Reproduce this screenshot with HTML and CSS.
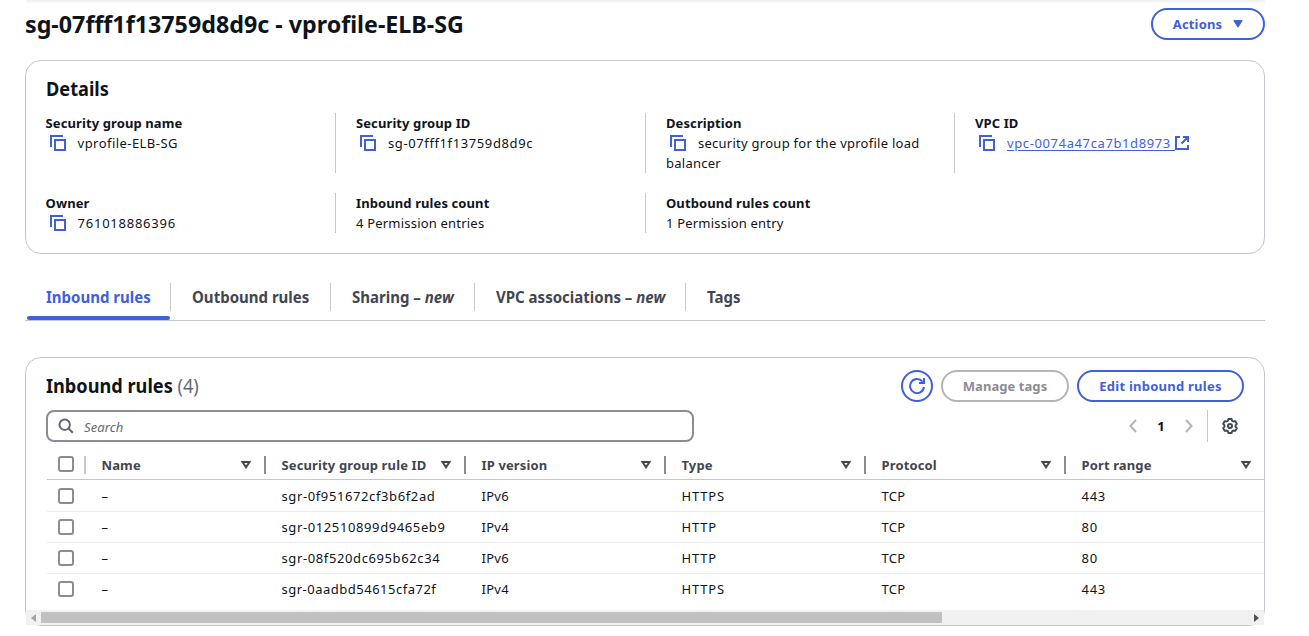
FILE: index.html
```html
<!DOCTYPE html>
<html lang="en">
<head>
<meta charset="utf-8">
<title>sg-07fff1f13759d8d9c - vprofile-ELB-SG</title>
<link rel="stylesheet" href="styles.css">
</head>
<body>
<svg class="defs" width="0" height="0">
  <symbol id="copy" viewBox="0 0 16 16"><path d="M1 12V1h12M5 5h10v10H5z" fill="none" stroke="currentColor" stroke-width="2"/></symbol>
  <symbol id="sort" viewBox="0 0 10 8"><path d="M1.500 1h7L5 6.200z" fill="none" stroke="currentColor" stroke-width="2"/></symbol>
</svg>
<div class="top-shadow"></div>
<main class="page">
  <header class="page-header">
    <h1>sg-07fff1f13759d8d9c - vprofile-ELB-SG</h1>
    <button class="btn actions">Actions<svg width="10" height="8" viewBox="0 0 10 8"><path d="M.8.6h8.400L5 7.200z" fill="currentColor" stroke="currentColor" stroke-linejoin="round"/></svg></button>
  </header>

  <section class="card details">
    <h2>Details</h2>
    <dl class="grid">
      <div class="cell"><dt>Security group name</dt><dd><svg class="copy"><use href="#copy"/></svg><span class="mixed">vprofile-ELB-SG</span></dd></div>
      <div class="cell"><dt>Security group ID</dt><dd><svg class="copy"><use href="#copy"/></svg><span class="id">sg-07fff1f13759d8d9c</span></dd></div>
      <div class="cell"><dt>Description</dt><dd><svg class="copy"><use href="#copy"/></svg>security group for the vprofile load balancer</dd></div>
      <div class="cell"><dt>VPC ID</dt><dd><svg class="copy"><use href="#copy"/></svg><a class="id" href="#">vpc-0074a47ca7b1d8973&nbsp;</a><svg class="external" width="14" height="14" viewBox="0 0 14 14"><path d="M5 1H1v12h12V9M8 1h5v5M13 1 6.500 7.500" fill="none" stroke="currentColor" stroke-width="2"/></svg></dd></div>
      <div class="cell"><dt>Owner</dt><dd><svg class="copy"><use href="#copy"/></svg><span class="num">761018886396</span></dd></div>
      <div class="cell"><dt>Inbound rules count</dt><dd class="plain">4 Permission entries</dd></div>
      <div class="cell"><dt>Outbound rules count</dt><dd class="plain">1 Permission entry</dd></div>
    </dl>
  </section>

  <nav class="tabs">
    <a class="tab active" href="#"><span>Inbound rules</span></a>
    <a class="tab outbound" href="#"><span>Outbound rules</span></a>
    <a class="tab sharing" href="#"><span>Sharing – <em>new</em></span></a>
    <a class="tab vpc" href="#"><span>VPC associations – <em>new</em></span></a>
    <a class="tab" href="#"><span>Tags</span></a>
  </nav>

  <section class="card rules">
    <header class="rules-header">
      <h2>Inbound rules <span class="count">(4)</span></h2>
      <div class="buttons">
        <button class="btn refresh" aria-label="Refresh"><svg width="16" height="16" viewBox="0 0 16 16"><path d="M15 9A7 7 0 1 1 13.500 3.700M15 0v5h-5" fill="none" stroke="currentColor" stroke-width="2"/></svg></button>
        <button class="btn manage" disabled>Manage tags</button>
        <button class="btn edit">Edit inbound rules</button>
      </div>
    </header>
    <div class="tools">
      <div class="search"><svg width="16" height="16" viewBox="0 0 16 16"><path d="M10.500 10.500l4.300 4.300" stroke="currentColor" stroke-width="2"/><circle cx="6.700" cy="6.700" r="5.200" fill="none" stroke="currentColor" stroke-width="2"/></svg><span>Search</span></div>
      <div class="pager">
        <svg class="chev" width="8" height="14" viewBox="0 0 8 14"><path d="M7 1 1.500 7 7 13" fill="none" stroke="currentColor" stroke-width="2"/></svg>
        <b>1</b>
        <svg class="chev" width="8" height="14" viewBox="0 0 8 14"><path d="M1 1l5.500 6L1 13" fill="none" stroke="currentColor" stroke-width="2"/></svg>
        <span class="rule"></span>
        <svg class="gear" width="16" height="16" viewBox="0 0 16 16"><path d="M6.400 1h3.200l.6 1.900 1.100.6 1.900-.4 1.600 2.700-1.300 1.500v1.400l1.300 1.500-1.600 2.700-1.900-.4-1.100.6-.6 1.900H6.400l-.6-1.900-1.100-.6-1.900.4-1.600-2.700 1.300-1.500V7.300L1.200 5.800l1.600-2.700 1.900.4 1.100-.6z" fill="none" stroke="currentColor" stroke-width="1.900" stroke-linejoin="round"/><circle cx="8" cy="8" r="2" fill="none" stroke="currentColor" stroke-width="2"/></svg>
      </div>
    </div>
    <div class="table">
      <div class="row head">
        <div class="check"><i></i></div>
        <div class="th">Name<svg><use href="#sort"/></svg></div>
        <div class="th">Security group rule ID<svg><use href="#sort"/></svg></div>
        <div class="th">IP version<svg><use href="#sort"/></svg></div>
        <div class="th">Type<svg><use href="#sort"/></svg></div>
        <div class="th">Protocol<svg><use href="#sort"/></svg></div>
        <div class="th">Port range<svg><use href="#sort"/></svg></div>
      </div>
      <div class="row"><div class="check"><i></i></div><div>–</div><div class="id">sgr-0f951672cf3b6f2ad</div><div>IPv6</div><div class="caps">HTTPS</div><div>TCP</div><div class="num">443</div></div>
      <div class="row"><div class="check"><i></i></div><div>–</div><div class="id">sgr-012510899d9465eb9</div><div>IPv4</div><div class="caps">HTTP</div><div>TCP</div><div class="num">80</div></div>
      <div class="row"><div class="check"><i></i></div><div>–</div><div class="id">sgr-08f520dc695b62c34</div><div>IPv6</div><div class="caps">HTTP</div><div>TCP</div><div class="num">80</div></div>
      <div class="row"><div class="check"><i></i></div><div>–</div><div class="id last-id">sgr-0aadbd54615cfa72f</div><div>IPv4</div><div class="caps">HTTPS</div><div>TCP</div><div class="num">443</div></div>
    </div>
    <div class="scrollbar">
      <svg width="5" height="8" viewBox="0 0 5 8"><path d="M5 0v8L0 4z" fill="#a3a3a3"/></svg>
      <span class="thumb"></span>
      <svg width="5" height="8" viewBox="0 0 5 8"><path d="M0 0v8l5-4z" fill="#505050"/></svg>
    </div>
  </section>
</main>
</body>
</html>
```
FILE: styles.css
```css
* { box-sizing: border-box; }
body {
  margin: 0;
  height: 636px;
  overflow: hidden;
  background: #fff;
  color: #0f141a;
  font: 13px/20px "Noto Sans", "Open Sans", sans-serif;
  letter-spacing: .26px;
}
.defs { position: absolute; }
h1, h2, dl, dd { margin: 0; }
svg { flex: none; }
.top-shadow {
  height: 4px;
  margin: 0 44px 0 26px;
  background: linear-gradient(#f1f1f2, #fff);
}
.page { width: 1240px; margin: 4px 0 0 25px; }

.page-header { display: flex; justify-content: space-between; height: 32px; }
/* Headings are set slightly condensed */
h1, h2, .tab span { transform-origin: left center; letter-spacing: 0; white-space: nowrap; }
h1 { font-size: 24px; line-height: 32px; font-weight: 700; transform: scaleX(.969); }
h2 { font-size: 20px; line-height: 24px; font-weight: 700; transform: scaleX(.908); }

.btn {
  display: flex;
  align-items: center;
  justify-content: center;
  height: 32px;
  padding: 0;
  border: 2px solid #3f5fdb;
  border-radius: 16px;
  background: #fff;
  color: #3f5fdb;
  font: 700 13px/20px "Noto Sans", "Open Sans", sans-serif;
  letter-spacing: .24px;
}
.btn:disabled { border-color: #b4b4bb; color: #8c8c94; }
.actions { width: 114px; gap: 11px; letter-spacing: .15px; }

.card { border: 1px solid #c6c6cd; border-radius: 16px; }
.details { height: 194px; margin-top: 20px; padding: 16px 20px 16px 19.600px; }
.grid {
  display: grid;
  grid-template-columns: 289.400px 310px 309px 1fr;
  grid-template-rows: 60px 40px;
  row-gap: 20px;
  margin-top: 12px;
}
.cell { padding-right: 20px; }
.cell:not(:nth-child(4n + 1)) { padding-left: 20px; border-left: 1px solid #c6c6cd; }
dt { font-weight: 700; letter-spacing: .1px; }
.copy { width: 16px; height: 16px; margin: 0 12px 0 4px; vertical-align: -3px; color: #3f5fdb; }
.external { vertical-align: -2px; color: #3f5fdb; }
a { color: #3f5fdb; text-underline-offset: 2px; }
.id { letter-spacing: .61px; }
.last-id { letter-spacing: .5px; }
.num { letter-spacing: .75px; }
.caps { letter-spacing: .8px; }
.mixed { letter-spacing: .45px; }
.plain { letter-spacing: .2px; }

.tabs { display: flex; align-items: flex-start; height: 41px; margin-top: 26px; border-bottom: 1px solid #c6c6cd; }
.tab {
  height: 40px;
  padding: 5px 0 0 21px;
  color: #424650;
  font-size: 16px;
  line-height: 24px;
  font-weight: 700;
  text-decoration: none;
  white-space: nowrap;
  background: linear-gradient(#c6c6cd, #c6c6cd) right 3px / 1px 28px no-repeat;
}
.tab span { display: inline-block; transform: scaleX(.938); }
.tab:last-child { background: none; }
.tab.active { position: relative; width: 146px; color: #3f5fdb; }
.tab.outbound { width: 160px; }
.tab.sharing { width: 144px; }
.tab.vpc { width: 211px; }
.tab.active::after {
  content: "";
  position: absolute;
  left: 2px;
  right: 1px;
  bottom: 0;
  height: 4px;
  border-radius: 2px;
  background: #3f5fdb;
}

.rules { height: 269px; margin-top: 36px; }
.rules-header { display: flex; justify-content: space-between; padding: 12px 20px 0; }
.rules-header h2 { padding-top: 4px; }
.count { color: #656871; font-weight: 400; }
.buttons { display: flex; gap: 8px; }
.refresh { width: 32px; }
.manage { width: 128px; letter-spacing: .06px; }
.edit { width: 167px; }
.tools { display: flex; justify-content: space-between; padding: 8px 20px 0; }
.search {
  display: flex;
  align-items: center;
  gap: 10px;
  width: 648px;
  height: 32px;
  padding-left: 10px;
  border: 2px solid #8c8c94;
  border-radius: 8px;
  color: #656871;
  font-style: italic;
  letter-spacing: .1px;
}
.search span { padding-top: 2px; }
.pager { display: flex; align-items: center; padding-right: 6px; color: #424650; }
.pager b { width: 48px; text-align: center; color: #0f141a; }
.chev { color: #b4b4bb; }
.rule { width: 1px; height: 32px; margin: 0 14px; background: #c6c6cd; }

.table { padding-left: 21px; height: 168px; }
.row {
  display: grid;
  grid-template-columns: 54.500px 180px repeat(4, 200px) 1fr;
  align-items: center;
  height: 31px;
  border-bottom: 1px solid #ebebf0;
}
.row:nth-child(2) { height: 32px; }
.row:last-child { height: 30px; border-bottom: 0; }
.head {
  height: 38px;
  padding-top: 8px;
  border-color: #c6c6cd;
  color: #424650;
  font-weight: 700;
  letter-spacing: .13px;
}
.th { display: flex; align-items: center; justify-content: space-between; height: 18px; margin-right: 15.500px; padding-right: 13px; border-right: 2px solid #8c8c94; }
.th:last-child { margin: 0; padding-right: 13px; border: 0; }
.th svg { width: 10px; height: 8px; }
.check { padding-left: 11px; }
.check i { display: block; width: 16px; height: 16px; border: 2px solid #8c8c94; border-radius: 3px; }
.head .check { width: 39px; height: 18px; border-right: 2px solid #c6c6cd; }

.scrollbar { display: flex; align-items: center; justify-content: space-between; height: 15px; padding: 0 5px; background: #f1f1f1; }
.thumb { width: 901px; height: 11px; margin: 0 auto 0 5px; background: #c1c1c1; }
```
